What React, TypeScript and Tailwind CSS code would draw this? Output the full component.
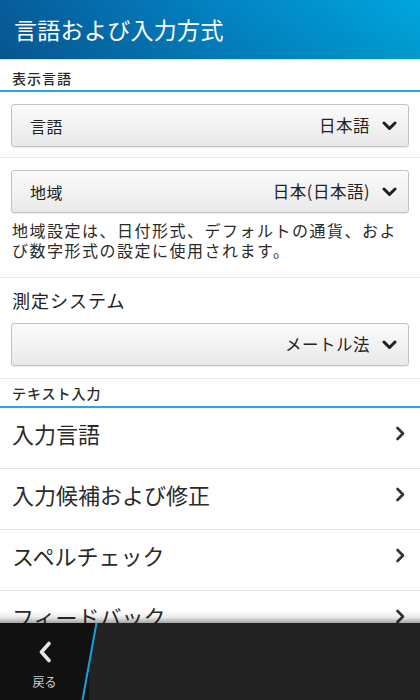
import React from 'react';

const FONT = { fontFamily: '"Noto Sans CJK JP", "Noto Sans", sans-serif' };

const ChevronDown = () => (
  <svg width="15" height="10" viewBox="0 0 15 10" className="shrink-0">
    <path d="M2 2 L7.5 7.5 L13 2" fill="none" stroke="#1e1e1e" strokeWidth="3" strokeLinecap="round" strokeLinejoin="round" />
  </svg>
);

const ChevronRight = () => (
  <svg width="10" height="15" viewBox="0 0 10 15" className="shrink-0">
    <path d="M2.5 2 L8 7.5 L2.5 13" fill="none" stroke="#333" strokeWidth="2.6" strokeLinecap="round" strokeLinejoin="round" />
  </svg>
);

const SectionHeader = ({ title, tall }: { title: string; tall?: boolean }) => (
  <div className="flex flex-col">
    <div className={`${tall ? 'h-[30px] pb-[1px]' : 'h-[27px] pb-[2px]'} flex items-end px-3 text-[14px] tracking-[1px] font-medium text-[#2a2a2a]`}>
      {title}
    </div>
    <div className="h-[2px] bg-[#27a9df]" />
  </div>
);

const Dropdown = ({ label, value }: { label?: string; value: string }) => (
  <div className="mx-[11px] h-[43px] rounded-[3px] border border-[#c3c3c3] bg-gradient-to-b from-[#fbfbfb] to-[#e9e9e9] shadow-[0_1px_1px_rgba(0,0,0,0.08)] flex items-center pl-[18px] pr-[11px]">
    <span className="text-[16px] tracking-[0.5px] text-[#222]">{label}</span>
    <span className="ml-auto text-[16.5px] tracking-[0.5px] text-[#222]">{value}</span>
    <span className="ml-[12px]"><ChevronDown /></span>
  </div>
);

const Row = ({ title }: { title: string }) => (
  <div className="h-[61px] border-b border-[#e6e6e6] flex items-center pl-3 pr-[15px] pb-[10px]">
    <span className="text-[22px] text-[#2a2a2a]">{title}</span>
    <span className="ml-auto"><ChevronRight /></span>
  </div>
);

export default function App() {
  return (
    <div className="w-[420px] h-[700px] flex flex-col bg-white overflow-hidden" style={FONT}>
      <div className="relative h-[60px] shrink-0 bg-gradient-to-r from-[#075c9b] via-[#0382c3] to-[#00a6de] flex items-center px-[14px] border-b border-[#d8dde0]">
        <div className="absolute inset-0 bg-gradient-to-b from-transparent to-[rgba(0,0,0,0.08)]" />
        <h1 className="relative text-[23px] text-white tracking-[0.3px]">言語および入力方式</h1>
      </div>

      <div className="flex-1 overflow-hidden">
        <SectionHeader title="表示言語" tall />
        <div className="pt-[12px] pb-[10px] border-b border-[#ececec]">
          <Dropdown label="言語" value="日本語" />
        </div>
        <div className="pt-[12px] pb-[17px] border-b border-[#ececec]">
          <Dropdown label="地域" value="日本(日本語)" />
          <p className="mt-[7px] px-3 text-[16px] tracking-[1.5px] leading-[20px] text-[#2a2a2a]">
            地域設定は、日付形式、デフォルトの通貨、および数字形式の設定に使用されます。
          </p>
        </div>
        <div className="pt-[10px] pb-[12px] border-b border-[#ececec]">
          <div className="px-3 text-[18px] tracking-[1px] text-[#222] leading-[24px]">測定システム</div>
          <div className="mt-[11px]">
            <Dropdown value="メートル法" />
          </div>
        </div>
        <SectionHeader title="テキスト入力" />
        <Row title="入力言語" />
        <Row title="入力候補および修正" />
        <Row title="スペルチェック" />
        <Row title="フィードバック" />
      </div>

      <div className="relative h-[77px] shrink-0 bg-[#232323] flex">
        <div className="absolute -top-[12px] left-0 right-0 h-[12px] bg-gradient-to-b from-transparent via-[rgba(0,0,0,0.08)] to-[rgba(0,0,0,0.35)]" />
        <div className="w-[89px] bg-[#111] flex flex-col items-center pt-[18px]">
          <svg width="14" height="22" viewBox="0 0 14 22">
            <path d="M11 2.5 L3.5 11 L11 19.5" fill="none" stroke="#e6e6e6" strokeWidth="3.6" strokeLinecap="round" strokeLinejoin="round" />
          </svg>
          <span className="mt-[10px] text-[12px] text-[#cfcfcf]">戻る</span>
        </div>
        <svg className="absolute left-0 top-0" width="110" height="77" viewBox="0 0 110 77">
          <path d="M89 0 L96 0 L82 77 L89 77 Z" fill="#111" />
          <path d="M96.5 0 L82.5 77" stroke="#1a9fde" strokeWidth="2" />
        </svg>
      </div>
    </div>
  );
}
